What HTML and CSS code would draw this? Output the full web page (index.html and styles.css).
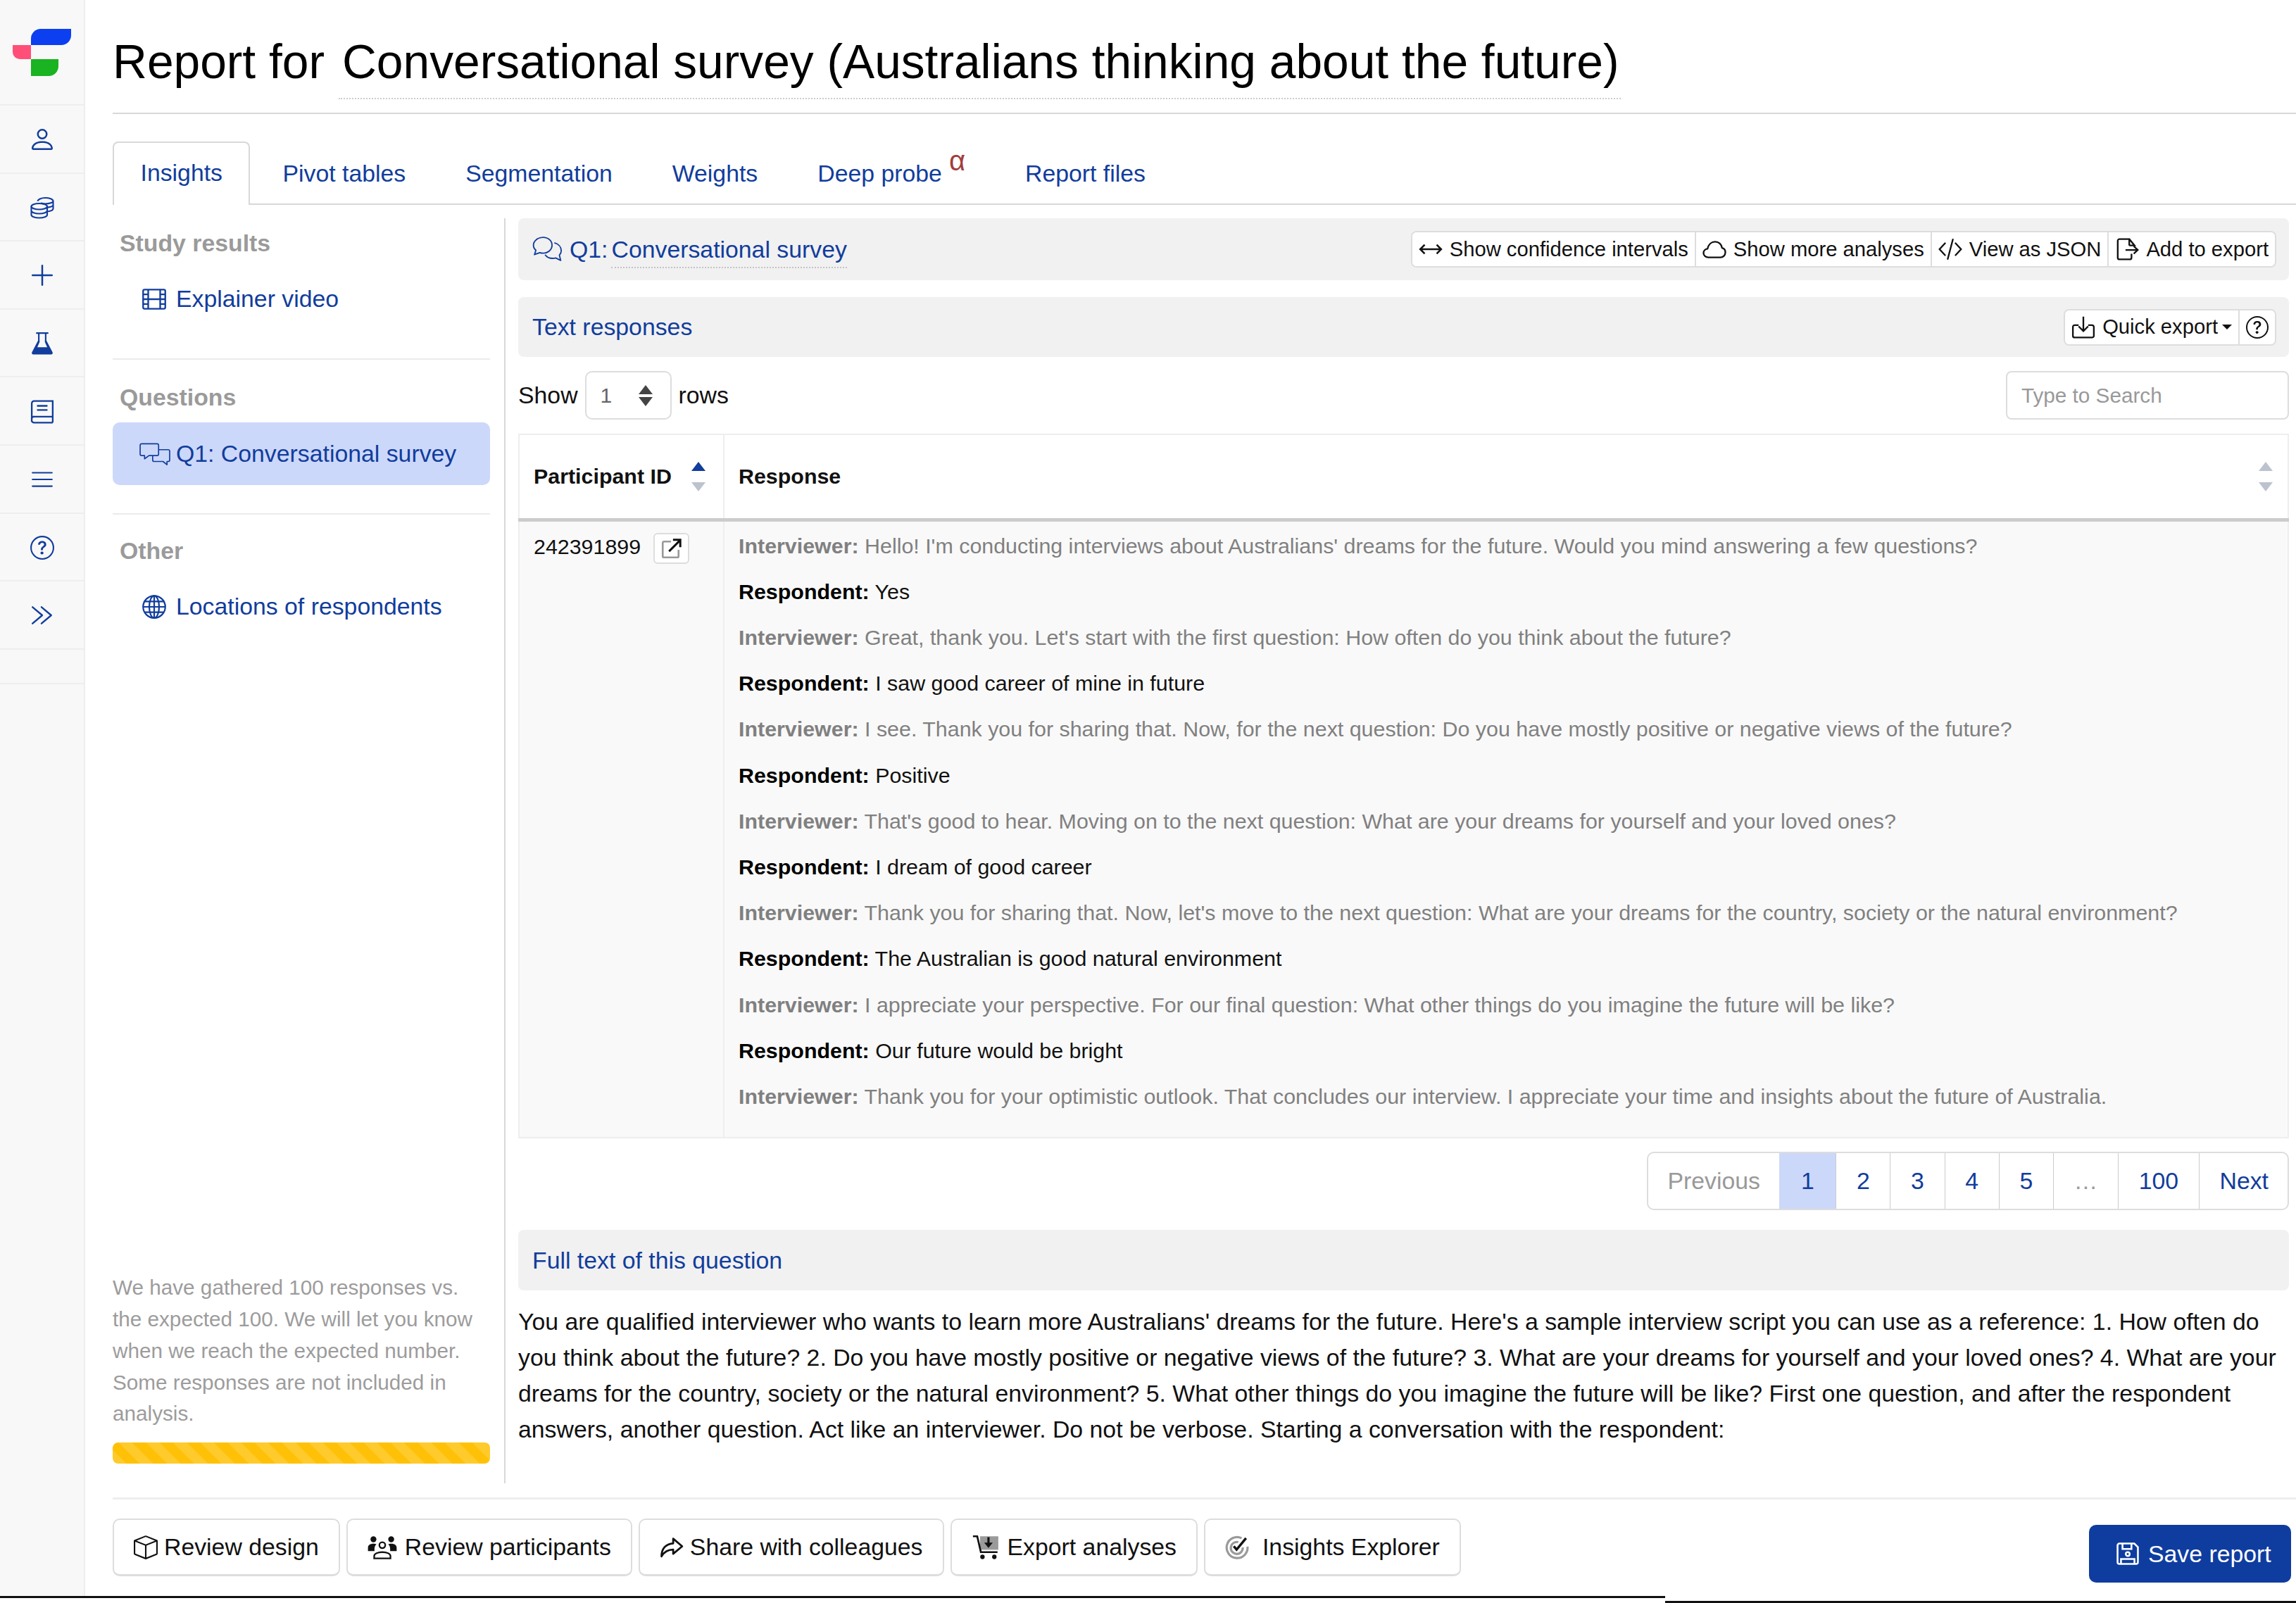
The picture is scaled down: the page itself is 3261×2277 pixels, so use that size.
FILE: index.html
```html
<!DOCTYPE html>
<html lang="en">
<head>
<meta charset="utf-8">
<title>Report for Conversational survey</title>
<link rel="stylesheet" href="styles.css">
</head>
<body>
<svg class="sprite" xmlns="http://www.w3.org/2000/svg">
  <symbol id="i-person" viewBox="0 0 16 16"><path fill="currentColor" d="M8 8a3 3 0 1 0 0-6 3 3 0 0 0 0 6Zm2-3a2 2 0 1 1-4 0 2 2 0 0 1 4 0Zm4 8c0 1-1 1-1 1H3s-1 0-1-1 1-4 6-4 6 3 6 4Zm-1-.004c-.001-.246-.154-.986-.832-1.664C11.516 10.68 10.289 10 8 10c-2.29 0-3.516.68-4.168 1.332-.678.678-.83 1.418-.832 1.664h10Z"/></symbol>
  <symbol id="i-coins" viewBox="0 0 16 16"><g fill="none" stroke="currentColor" stroke-width="1"><ellipse cx="6" cy="7.2" rx="5.3" ry="2"/><path d="M.7 7.2v5.6c0 1.1 2.4 2 5.3 2s5.3-.9 5.3-2V7.2M.7 10c0 1.1 2.4 2 5.3 2s5.3-.9 5.3-2"/><path d="M5 3.6c0-1.1 2.3-2.2 5-2.2s5.300 1 5.300 2.200v5c0 .9-1.500 1.700-4 2M7 5c1 .3 2 .4 3 .4 2.900 0 5.300-.8 5.300-1.800M11.500 7.800c2-.2 3.800-.9 3.800-1.800"/></g></symbol>
  <symbol id="i-plus" viewBox="0 0 16 16"><path fill="currentColor" d="M8 2a.5.5 0 0 1 .5.5v5h5a.5.5 0 0 1 0 1h-5v5a.5.5 0 0 1-1 0v-5h-5a.5.5 0 0 1 0-1h5v-5A.5.5 0 0 1 8 2Z"/></symbol>
  <symbol id="i-flask" viewBox="0 0 16 16"><path fill="none" stroke="currentColor" stroke-width="1" stroke-linecap="round" d="M4.300 1h7.400M5.700 1v5.500M10.300 1v5.500"/><path fill="currentColor" d="M5.200 6h1v1L4.700 10.500h6.600L9.800 7V6h1l4 7.600c.5 1-.1 1.700-1 1.700H2.200c-.9 0-1.500-.7-1-1.700Z"/></symbol>
  <symbol id="i-book" viewBox="0 0 16 16"><g fill="none" stroke="currentColor" stroke-width="1.100"><path d="M15 11.200V.8H2.500A1.500 1.500 0 0 0 1 2.300v11M15 15.200H2.500a1.500 1.500 0 0 1-1.500-2 1.500 1.500 0 0 1 1.500-2H15v4"/><path d="M4.500 4h7M4.500 6.800h7"/></g></symbol>
  <symbol id="i-list" viewBox="0 0 16 16"><path fill="currentColor" d="M1 12.500a.5.5 0 0 1 .5-.5h13a.5.5 0 0 1 0 1h-13a.5.5 0 0 1-.5-.5zm0-4.500a.5.5 0 0 1 .5-.5h13a.5.5 0 0 1 0 1h-13A.5.5 0 0 1 1 8zm0-4.500A.5.5 0 0 1 1.500 3h13a.5.5 0 0 1 0 1h-13a.5.5 0 0 1-.5-.5z"/></symbol>
  <symbol id="i-help" viewBox="0 0 16 16"><path fill="currentColor" d="M8 15A7 7 0 1 1 8 1a7 7 0 0 1 0 14zm0 1A8 8 0 1 0 8 0a8 8 0 0 0 0 16z"/><path fill="currentColor" d="M5.255 5.786a.237.237 0 0 0 .241.247h.825c.138 0 .248-.113.266-.25.09-.656.54-1.134 1.342-1.134.686 0 1.314.343 1.314 1.168 0 .635-.374.927-.965 1.371-.673.489-1.206 1.06-1.168 1.987l.003.217a.25.25 0 0 0 .25.246h.811a.25.25 0 0 0 .25-.25v-.105c0-.718.273-.927 1.01-1.486.609-.463 1.244-.977 1.244-2.056 0-1.511-1.276-2.241-2.673-2.241-1.267 0-2.655.59-2.75 2.286zm1.557 5.763c0 .533.425.927 1.01.927.609 0 1.028-.394 1.028-.927 0-.552-.42-.94-1.029-.94-.584 0-1.009.388-1.009.94z"/></symbol>
  <symbol id="i-chevrons" viewBox="0 0 16 16"><path fill="none" stroke="currentColor" stroke-width="1.100" stroke-linecap="round" stroke-linejoin="round" d="M1.500 2.500 8 8l-6.500 5.500M7.500 2.500 14 8l-6.500 5.500"/></symbol>
  <symbol id="i-film" viewBox="0 0 16 16"><g fill="none" stroke="currentColor" stroke-width="1.100"><rect x=".6" y="1.600" width="14.800" height="12.800" rx="1"/><path d="M4 1.600v12.800M12 1.600v12.800M.6 8h14.800M.6 4.800H4M.6 11.200H4M12 4.800h3.400M12 11.200h3.400"/></g></symbol>
  <symbol id="i-globe" viewBox="0 0 16 16"><g fill="none" stroke="currentColor" stroke-width="1.050"><circle cx="8" cy="8" r="7.400"/><ellipse cx="8" cy="8" rx="3.300" ry="7.400"/><path d="M8 .6v14.800M.6 8h14.800M1.700 4.400h12.600M1.700 11.600h12.600"/></g></symbol>
  <symbol id="i-chat-sq" viewBox="0 0 21 16"><g fill="none" stroke="currentColor" stroke-width=".8" stroke-linejoin="round"><path d="M1.500 1h10.500a1 1 0 0 1 1 1v6a1 1 0 0 1-1 1H6.500L3.500 11.200V9H1.500a1 1 0 0 1-1-1V2a1 1 0 0 1 1-1Z"/><path d="M13 5h6.500a1 1 0 0 1 1 1v6a1 1 0 0 1-1 1h-.800v2.200L16 13h-6a1 1 0 0 1-1-1V9"/></g></symbol>
  <symbol id="i-chat-round" viewBox="0 0 21 19"><g fill="none" stroke="currentColor" stroke-width=".9" stroke-linejoin="round"><path d="M7.500 1c3.600 0 6.200 2.500 6.200 5.500S11.100 12 7.500 12c-.8 0-1.500-.1-2.200-.4L1.500 13l1-3C1.300 9 .8 7.800.8 6.500.8 3.500 3.900 1 7.500 1Z"/><path d="M15.300 4.800c2.800.8 4.800 2.900 4.800 5.400 0 1.200-.5 2.300-1.300 3.200l.9 3.600-3.500-1.700c-.6.200-1.300.3-2 .3-2.200 0-4.300-1-5.300-2.600"/></g></symbol>
  <symbol id="i-arrows" viewBox="0 0 16 16"><path fill="none" stroke="currentColor" stroke-width="1.200" d="M1 8h14M4 5 1 8l3 3M12 5l3 3-3 3"/></symbol>
  <symbol id="i-cloud" viewBox="0 0 16 16"><path fill="none" stroke="currentColor" stroke-width="1.100" stroke-linejoin="round" d="M4 13.500c-1.800 0-3.300-1.200-3.300-2.900 0-1.500 1.200-2.700 2.700-2.900C4 4.900 6 3 8.500 3c2.400 0 4.300 1.800 4.600 4.100 1.300.3 2.200 1.500 2.200 3 0 1.900-1.500 3.400-3.300 3.400Z"/></symbol>
  <symbol id="i-code" viewBox="0 0 16 16"><path fill="none" stroke="currentColor" stroke-width="1.100" stroke-linecap="round" d="M4.500 4 .8 8l3.700 4M11.500 4l3.700 4-3.700 4M9.700 1.500l-3.400 13"/></symbol>
  <symbol id="i-addfile" viewBox="0 0 16 16"><path fill="none" stroke="currentColor" stroke-width="1.100" d="M9.500 5.500V1.200H3a1.200 1.200 0 0 0-1.200 1.200v11.200A1.200 1.200 0 0 0 3 14.800h6.800A1.200 1.200 0 0 0 11 13.600V11M9.500 1.200 13 5.500H9.500M7 8.500h8M12.500 6l2.700 2.500-2.700 2.500"/></symbol>
  <symbol id="i-import" viewBox="0 0 16 16"><path fill="none" stroke="currentColor" stroke-width="1.100" d="M8 .8v9.500M4.800 7.300 8 10.500l3.200-3.200M4.800 6.500H2.200a1.200 1.200 0 0 0-1.200 1.200v5.900A1.200 1.200 0 0 0 2.200 14.800h11.600a1.200 1.200 0 0 0 1.200-1.200V7.700a1.200 1.200 0 0 0-1.200-1.200h-2.600"/></symbol>
  <symbol id="i-external" viewBox="0 0 16 16"><path fill="none" stroke="currentColor" stroke-width="1.400" d="M7.500 2.800H2.200a1 1 0 0 0-1 1v10a1 1 0 0 0 1 1h10a1 1 0 0 0 1-1V9"/><path fill="none" stroke="#111" stroke-width="1.600" d="M6 10.200 14 2.200M9 1.500h5.500V7"/></symbol>
  <symbol id="i-box" viewBox="0 0 16 16"><path fill="currentColor" d="M8.186 1.113a.5.5 0 0 0-.372 0L1.846 3.5 8 5.961 14.154 3.500 8.186 1.113zM15 4.239l-6.500 2.600v7.922l6.500-2.600V4.240zM7.500 14.762V6.838L1 4.239v7.925l6.500 2.600zM7.443.184a1.500 1.500 0 0 1 1.114 0l7.129 2.852A.5.5 0 0 1 16 3.500v8.662a1 1 0 0 1-.629.928l-7.185 2.874a.5.5 0 0 1-.372 0L.63 13.090a1 1 0 0 1-.63-.928V3.500a.5.5 0 0 1 .314-.464L7.443.184z"/></symbol>
  <symbol id="i-people" viewBox="0 0 20 16"><g fill="currentColor"><circle cx="4" cy="2.500" r="2"/><circle cx="16" cy="2.500" r="2"/><path d="M.3 10.500V8.200C.3 6.500 1.800 5.500 4 5.500c.8 0 1.500.1 2 .4-.9.900-1.300 2-1.300 3v1.600ZM19.700 10.500V8.200c0-1.700-1.500-2.700-3.700-2.700-.8 0-1.500.1-2 .4.900.900 1.300 2 1.300 3v1.600Z"/></g><g fill="none" stroke="currentColor" stroke-width="1.100"><circle cx="10" cy="6.500" r="2"/><path d="M4.500 15.400v-1.600c0-1.600 2.500-2.600 5.500-2.600s5.500 1 5.500 2.600v1.600Z"/></g></symbol>
  <symbol id="i-share" viewBox="0 0 16 16"><path fill="none" stroke="currentColor" stroke-width="1.300" stroke-linejoin="round" d="M9 2.200 15 7.300 9 12.300V9.500C5.500 9.500 3 11 1.200 14c0-5 2.800-8.500 7.800-8.700Z"/></symbol>
  <symbol id="i-cart" viewBox="0 0 18 16"><rect x="5" y="1" width="11.500" height="8.500" fill="#9a9a9a"/><path fill="none" stroke="currentColor" stroke-width="1.200" d="M.5 1h2.700l2.300 10h10.500"/><path fill="currentColor" d="M11 1.500v3.500h2l-2.700 3.300L7.600 5h2V1.500Z"/><circle cx="6.500" cy="14" r="1.400" fill="currentColor"/><circle cx="14" cy="14" r="1.400" fill="currentColor"/></symbol>
  <symbol id="i-target" viewBox="0 0 16 16"><g fill="none" stroke="#9a9a9a" stroke-width="1.500"><path d="M11 1.800A7 7 0 1 0 15 7.500"/><path d="M8.800 4.500A4 4 0 1 0 11.800 8"/></g><path fill="none" stroke="#111" stroke-width="1.600" d="M5.800 7.200 7.700 9.500 14 1.800"/></symbol>
  <symbol id="i-save" viewBox="0 0 16 16"><g fill="none" stroke="currentColor" stroke-width="1.200"><path d="M1.200 2.400a1.200 1.200 0 0 1 1.200-1.200h10L14.800 3.600v10a1.200 1.200 0 0 1-1.200 1.200H2.400a1.200 1.200 0 0 1-1.200-1.200Z"/><path d="M4.500 1.200v3.600h6V1.200M3.500 14.800V11.500h9v3.300"/><circle cx="8" cy="8.200" r="1.300"/></g></symbol>
</svg>

<div class="app">
  <nav class="rail">
    <div class="rail-logo">
      <svg class="logo" viewBox="0 0 83 67" xmlns="http://www.w3.org/2000/svg">
        <path fill="#0b3ff0" d="M26 14A14 14 0 0 1 40 0H83V9A14 14 0 0 1 69 23H26Z"/>
        <path fill="#ff4f79" d="M0 23H26V43H10A10 10 0 0 1 0 33Z"/>
        <path fill="#1ab321" d="M26 43H65V53A14 14 0 0 1 51 67H26Z"/>
      </svg>
    </div>
    <div class="rail-item"><svg class="rail-ico rail-ico-lg"><use href="#i-person"/></svg></div>
    <div class="rail-item"><svg class="rail-ico"><use href="#i-coins"/></svg></div>
    <div class="rail-item"><svg class="rail-ico rail-ico-lg"><use href="#i-plus"/></svg></div>
    <div class="rail-item"><svg class="rail-ico"><use href="#i-flask"/></svg></div>
    <div class="rail-item"><svg class="rail-ico"><use href="#i-book"/></svg></div>
    <div class="rail-item"><svg class="rail-ico"><use href="#i-list"/></svg></div>
    <div class="rail-item"><svg class="rail-ico"><use href="#i-help"/></svg></div>
    <div class="rail-item"><svg class="rail-ico"><use href="#i-chevrons"/></svg></div>
    <div class="rail-item rail-spacer"></div>
  </nav>

  <main class="main">
    <header class="title-bar">
      <h1 class="title"><span>Report for</span><span class="title-edit">Conversational survey (Australians thinking about the future)</span></h1>
    </header>

    <ul class="tabs">
      <li class="tab tab-active">Insights</li>
      <li class="tab">Pivot tables</li>
      <li class="tab">Segmentation</li>
      <li class="tab">Weights</li>
      <li class="tab">Deep probe<sup class="alpha">α</sup></li>
      <li class="tab">Report files</li>
    </ul>

    <div class="columns">
      <aside class="side">
        <section class="side-section">
          <h2 class="side-head">Study results</h2>
          <a class="side-link"><svg class="side-ico"><use href="#i-film"/></svg>Explainer video</a>
        </section>
        <section class="side-section side-ruled">
          <h2 class="side-head">Questions</h2>
          <a class="side-link side-link-active"><svg class="side-ico-chat"><use href="#i-chat-sq"/></svg>Q1: Conversational survey</a>
        </section>
        <section class="side-section side-ruled side-last">
          <h2 class="side-head">Other</h2>
          <a class="side-link"><svg class="side-ico"><use href="#i-globe"/></svg>Locations of respondents</a>
        </section>
        <div class="side-note">
          <p class="note-text">We have gathered 100 responses vs. the expected 100. We will let you know when we reach the expected number. Some responses are not included in analysis.</p>
          <div class="progress"></div>
        </div>
      </aside>

      <section class="content">
        <div class="panel panel-q">
          <div class="panel-title">
            <svg class="q-ico"><use href="#i-chat-round"/></svg><span>Q1:</span><span class="q-name">Conversational survey</span>
          </div>
          <div class="btn-group">
            <button class="tool"><svg class="tool-ico"><use href="#i-arrows"/></svg>Show confidence intervals</button>
            <button class="tool"><svg class="tool-ico"><use href="#i-cloud"/></svg>Show more analyses</button>
            <button class="tool"><svg class="tool-ico"><use href="#i-code"/></svg>View as JSON</button>
            <button class="tool"><svg class="tool-ico"><use href="#i-addfile"/></svg>Add to export</button>
          </div>
        </div>

        <div class="panel panel-text">
          <div class="panel-title">Text responses</div>
          <div class="btn-group">
            <button class="tool"><svg class="tool-ico"><use href="#i-import"/></svg>Quick export<span class="caret"></span></button>
            <button class="tool tool-help"><svg class="tool-ico"><use href="#i-help"/></svg></button>
          </div>
        </div>

        <div class="table-controls">
          <label class="rows-label">Show
            <span class="rows-select"><span>1</span><span class="updown"><i class="tri tri-up tri-dark"></i><i class="tri tri-down tri-dark"></i></span></span>
            rows</label>
          <div class="search">Type to Search</div>
        </div>

        <table class="responses">
          <thead>
            <tr>
              <th class="col-id"><div class="th-inner">Participant ID<span class="sorter"><i class="tri tri-up tri-blue"></i><i class="tri tri-down tri-pale"></i></span></div></th>
              <th><div class="th-inner">Response<span class="sorter"><i class="tri tri-up tri-pale"></i><i class="tri tri-down tri-pale"></i></span></div></th>
            </tr>
          </thead>
          <tbody>
            <tr>
              <td class="cell-id"><div class="id-inner">242391899<span class="open-btn"><svg class="open-ico"><use href="#i-external"/></svg></span></div></td>
              <td class="cell-text">
                <p class="q"><b>Interviewer:</b> Hello! I'm conducting interviews about Australians' dreams for the future. Would you mind answering a few questions?</p>
                <p class="a"><b>Respondent:</b> Yes</p>
                <p class="q"><b>Interviewer:</b> Great, thank you. Let's start with the first question: How often do you think about the future?</p>
                <p class="a"><b>Respondent:</b> I saw good career of mine in future</p>
                <p class="q"><b>Interviewer:</b> I see. Thank you for sharing that. Now, for the next question: Do you have mostly positive or negative views of the future?</p>
                <p class="a"><b>Respondent:</b> Positive</p>
                <p class="q"><b>Interviewer:</b> That's good to hear. Moving on to the next question: What are your dreams for yourself and your loved ones?</p>
                <p class="a"><b>Respondent:</b> I dream of good career</p>
                <p class="q"><b>Interviewer:</b> Thank you for sharing that. Now, let's move to the next question: What are your dreams for the country, society or the natural environment?</p>
                <p class="a"><b>Respondent:</b> The Australian is good natural environment</p>
                <p class="q"><b>Interviewer:</b> I appreciate your perspective. For our final question: What other things do you imagine the future will be like?</p>
                <p class="a"><b>Respondent:</b> Our future would be bright</p>
                <p class="q"><b>Interviewer:</b> Thank you for your optimistic outlook. That concludes our interview. I appreciate your time and insights about the future of Australia.</p>
              </td>
            </tr>
          </tbody>
        </table>

        <div class="pager-row">
          <ul class="pager">
            <li class="page page-off">Previous</li>
            <li class="page page-on">1</li>
            <li class="page">2</li>
            <li class="page">3</li>
            <li class="page">4</li>
            <li class="page">5</li>
            <li class="page page-off page-gap">…</li>
            <li class="page">100</li>
            <li class="page">Next</li>
          </ul>
        </div>

        <div class="panel panel-full"><div class="panel-title">Full text of this question</div></div>
        <p class="full-text">You are qualified interviewer who wants to learn more Australians' dreams for the future. Here's a sample interview script you can use as a reference: 1. How often do you think about the future? 2. Do you have mostly positive or negative views of the future? 3. What are your dreams for yourself and your loved ones? 4. What are your dreams for the country, society or the natural environment? 5. What other things do you imagine the future will be like? First one question, and after the respondent answers, another question. Act like an interviewer. Do not be verbose. Starting a conversation with the respondent:</p>
      </section>
    </div>

    <footer class="actions">
      <div class="action-list">
        <button class="action"><svg class="action-ico"><use href="#i-box"/></svg>Review design</button>
        <button class="action"><svg class="action-ico-wide action-ico-people"><use href="#i-people"/></svg>Review participants</button>
        <button class="action"><svg class="action-ico"><use href="#i-share"/></svg>Share with colleagues</button>
        <button class="action"><svg class="action-ico-wide"><use href="#i-cart"/></svg>Export analyses</button>
        <button class="action"><svg class="action-ico action-ico-target"><use href="#i-target"/></svg>Insights Explorer</button>
      </div>
      <button class="save"><svg class="action-ico save-ico"><use href="#i-save"/></svg>Save report</button>
    </footer>
  </main>
</div>
<div class="edge"><div class="edge-left"></div><div class="edge-right"></div></div>
</body>
</html>
```

FILE: styles.css
```css
* { box-sizing: border-box; }
html, body { margin: 0; padding: 0; background: #fff; }
body {
  width: 3261px;
  height: 2277px;
  overflow: hidden;
  font-family: "Liberation Sans", Arial, sans-serif;
  font-size: 33.8px;
  color: #111;
}
.sprite { display: none; }
button { font-family: inherit; color: inherit; background: #fff; }

.app { display: flex; height: 2267px; }

/* icon rail */
.rail {
  width: 121px;
  flex: none;
  background: #f8f8f8;
  border-right: 2px solid #eee;
  color: #113d9c;
}
.rail-logo { height: 150px; padding: 41px 0 0 18px; border-bottom: 2px solid #eee; }
.logo { width: 83px; height: 67px; display: block; }
.rail-item {
  height: 96.6px;
  padding-top: 2px;
  border-bottom: 2px solid #eee;
  display: flex;
  align-items: center;
  justify-content: center;
}
.rail-spacer { height: 49px; }
.rail-ico { width: 34px; height: 34px; }
.rail-ico-lg { width: 40px; height: 40px; }

/* main */
.main { flex: 1; min-width: 0; padding-left: 39px; display: flex; flex-direction: column; }
.title-bar { height: 162px; border-bottom: 2px solid #d8d8d8; padding-top: 38px; flex: none; }
.title { margin: 0; font-weight: 400; font-size: 67.7px; line-height: 100px; color: #000; display: flex; gap: 20px; }
.title-edit { border-bottom: 2px dotted #ccc; padding: 0 3px 0 5px; height: 103px; white-space: nowrap; }

/* tabs */
.tabs {
  list-style: none;
  margin: 39px 0 0;
  padding: 0;
  height: 90px;
  flex: none;
  display: flex;
  border-bottom: 2px solid #d8d8d8;
  color: #113d9c;
}
.tab { padding: 0 42.500px; height: 90px; display: flex; align-items: center; }
.tab-active {
  padding: 0 37.500px 4px;
  margin-right: 3.500px;
  border: 2px solid #d8d8d8;
  border-bottom: 0;
  border-radius: 8px 8px 0 0;
  background: #fff;
}
.alpha { font-size: 40px; color: #a33c3c; position: relative; top: -18px; margin-left: 10px; line-height: 1; }

/* columns */
.columns { display: flex; margin-top: 19px; flex: none; height: 1797px; }
.side {
  width: 558px;
  flex: none;
  padding: 10px 20px 28px 0;
  border-right: 2px solid #d8d8d8;
  display: flex;
  flex-direction: column;
}
.side-head { margin: 0 0 0 10px; height: 50px; line-height: 50px; font-size: 33.8px; font-weight: 700; color: #9a9a9a; }
.side-section { flex: none; }
.side-ruled { border-top: 2px solid #ebebeb; margin-top: 40px; padding-top: 28px; }
.side-last { padding-top: 26px; }
.side-link {
  display: flex;
  align-items: center;
  height: 89px;
  margin-top: 10px;
  color: #113d9c;
  padding-left: 42px;
  border-radius: 10px;
}
.side-link-active { background: #ccd8fa; margin-top: 11px; padding-left: 38px; }
.side-ico { width: 34px; height: 34px; margin-right: 14px; flex: none; }
.side-ico-chat { width: 44px; height: 34px; margin-right: 8px; flex: none; }
.side-note { margin-top: auto; }
.note-text { margin: 0 0 18px; font-size: 29.7px; line-height: 44.700px; color: #9c9c9c; }
.progress {
  height: 30px;
  border-radius: 8px;
  background-color: #ffc107;
  background-image: repeating-linear-gradient(45deg, rgba(255,255,255,.15) 0 13.650px, transparent 13.650px 27.300px);
}

/* right content */
.content { flex: 1; min-width: 0; padding: 0 10px 0 18px; }
.panel {
  background: #f1f1f1;
  border-radius: 8px;
  display: flex;
  align-items: center;
  justify-content: space-between;
  padding: 0 18px 0 20px;
  color: #113d9c;
}
.panel-q { height: 88px; }
.panel-text { height: 85px; margin-top: 24px; }
.panel-full { height: 86px; margin-top: 28px; }
.panel-title { display: flex; align-items: center; }
.q-ico { width: 43px; height: 39px; margin-right: 10px; }
.q-name { border-bottom: 2px dotted #c4c4c4; margin-left: 5px; height: 46px; margin-top: 8px; line-height: 38px; }
.btn-group { display: flex; height: 52px; border: 2px solid #ddd; border-radius: 8px; background: #fff; overflow: hidden; color: #111; }
.tool {
  border: 0;
  border-left: 2px solid #ddd;
  padding: 0 9px;
  font-size: 29.2px;
  display: flex;
  align-items: center;
  white-space: nowrap;
}
.tool:first-child { border-left: 0; }
.tool-ico { width: 34px; height: 34px; margin-right: 10px; flex: none; }
.tool-help { padding: 0 9px; }
.tool-help .tool-ico { width: 32px; height: 32px; margin-right: 0; }
.caret { margin-left: 6px; border: 7px solid transparent; border-top-color: #111; border-bottom: 0; }

.table-controls { display: flex; justify-content: space-between; margin-top: 20px; height: 69px; }
.rows-label { display: flex; align-items: center; gap: 10px; }
.rows-select {
  width: 123px;
  height: 69px;
  border: 2px solid #ddd;
  border-radius: 10px;
  padding: 0 20px;
  display: flex;
  align-items: center;
  justify-content: space-between;
  color: #666;
  font-size: 30px;
}
.updown { display: flex; flex-direction: column; gap: 4px; margin-right: 5px; }
.tri { display: block; width: 0; height: 0; border-left: 10px solid transparent; border-right: 10px solid transparent; }
.tri-up { border-bottom: 13px solid; }
.tri-down { border-top: 13px solid; }
.tri-dark { color: #444; }
.tri-blue { border-bottom-color: #113d9c; }
.tri-pale.tri-up { border-bottom-color: #bcc3ce; }
.tri-pale.tri-down { border-top-color: #bcc3ce; }
.search {
  width: 402px;
  border: 2px solid #ddd;
  border-radius: 8px;
  padding-left: 20px;
  display: flex;
  align-items: center;
  font-size: 29.700px;
  color: #999;
}

.responses {
  width: 100%;
  margin-top: 20px;
  border-collapse: collapse;
  table-layout: fixed;
  font-size: 30.400px;
  border: 2px solid #eee;
}
.responses th { height: 121px; padding: 0 20px; background: #fff; border-bottom: 5px solid #ccc; border-left: 2px solid #eee; text-align: left; font-weight: 700; color: #111; }
.responses .col-id { width: 291px; border-left: 0; }
.th-inner { display: flex; justify-content: space-between; align-items: center; }
.sorter { display: flex; flex-direction: column; gap: 16px; margin-right: 1px; }
.col-id .sorter { margin-right: 5px; }
.responses td { background: #f9f9f9; vertical-align: top; border-left: 2px solid #eee; }
.responses .cell-id { border-left: 0; padding: 16px 20px 0; }
.id-inner { display: flex; align-items: flex-start; gap: 18px; line-height: 38px; }
.open-btn { width: 51px; height: 44px; border: 2px solid #ddd; border-radius: 6px; background: #fff; display: flex; align-items: center; justify-content: center; color: #999; }
.open-ico { width: 30px; height: 30px; }
.cell-text { padding: 2px 20px 25px; }
.cell-text p { margin: 0; line-height: 65.200px; white-space: nowrap; }
.q { color: #808080; }
.a { color: #111; }
.a b { color: #000; }

.pager-row { display: flex; justify-content: flex-end; margin-top: 19px; }
.pager { list-style: none; margin: 0; padding: 0; display: flex; height: 83px; border: 2px solid #ddd; border-radius: 10px; overflow: hidden; color: #113d9c; }
.page { padding: 0 28.700px; display: flex; align-items: center; border-left: 1.500px solid #ccc; }
.page:first-child { border-left: 0; padding: 0 27.500px; }
.page:last-child { padding-right: 27px; }
.page-off { color: #999; }
.page-on { background: #ccd8fa; border-left: 0; padding: 0 30.500px; }
.full-text { margin: 19px 0 0; line-height: 51px; }

/* footer */
.actions {
  margin-top: 20px;
  border-top: 3px solid #eee;
  flex: 1;
  display: flex;
  justify-content: space-between;
  padding: 27px 7px 0 0;
}
.action-list { display: flex; gap: 9px; height: 82px; }
.action {
  height: 82px;
  border: 2px solid #ddd;
  border-bottom-width: 3px;
  border-radius: 10px;
  padding: 0 28px;
  font-size: 33.800px;
  display: flex;
  align-items: center;
  white-space: nowrap;
}
.action-ico { width: 34px; height: 36px; margin-right: 9px; flex: none; }
.action-ico-wide { width: 42px; height: 36px; margin-right: 9px; flex: none; }
.action-ico-people { margin-right: 11px; }
.action-ico-target { margin-right: 19px; }
.save {
  margin-top: 9px;
  width: 287px;
  height: 82px;
  border: 0;
  border-radius: 10px;
  background: #0f3d9f;
  color: #fff;
  font-size: 33.800px;
  display: flex;
  align-items: center;
  padding: 0 0 0 38px;
}
.save-ico { margin-right: 12px; }

/* page bottom edge */
.edge { display: flex; height: 10px; }
.edge-left { width: 2365px; border-top: 3px solid #111; }
.edge-right { flex: 1; border-bottom: 3px solid #111; }
```
